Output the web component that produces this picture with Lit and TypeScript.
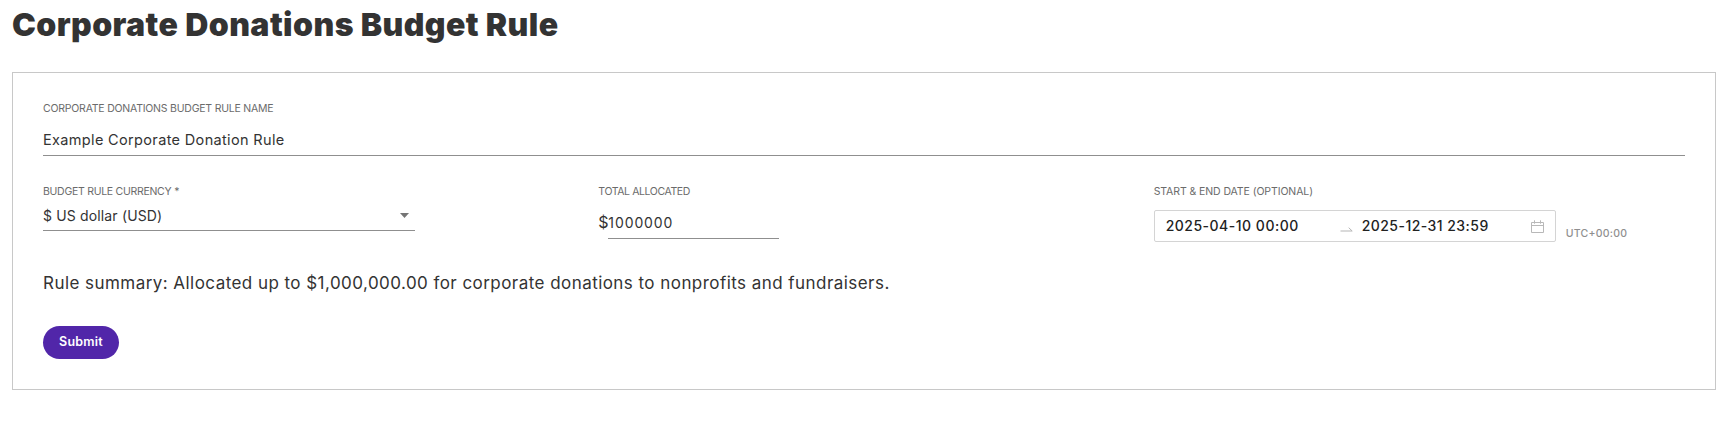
import { LitElement, html, css } from "lit";
import { customElement, property } from "lit/decorators.js";

@customElement("form-field")
class FormField extends LitElement {
  @property() label = "";
  @property() mark = "";

  static styles = css`
    :host {
      display: block;
      min-width: 0;
    }
    .label {
      box-sizing: border-box;
      height: 16px;
      padding-top: 1px;
      line-height: 16px;
      font-size: 10.5px;
      letter-spacing: var(--label-spacing, -0.22px);
      color: #6b6b6b;
      white-space: nowrap;
    }
    .mark {
      margin-left: 3px;
    }
  `;

  render() {
    return html`
      <div class="label">${this.label}${this.mark ? html`<span class="mark">${this.mark}</span>` : ""}</div>
      <slot></slot>
    `;
  }
}

@customElement("app-root")
class AppRoot extends LitElement {
  @property() heading = "Corporate Donations Budget Rule";

  static styles = css`
    :host {
      display: block;
      box-sizing: border-box;
      height: 422px;
      padding: 0 16px 0 12px;
      background: #fff;
      color: #333;
      font-family: Inter, "Liberation Sans", sans-serif;
    }
    .title {
      margin: 0 0 22px;
      font-size: 32px;
      font-weight: 900;
      line-height: 50px;
      letter-spacing: 0.43px;
    }
    .card {
      box-sizing: border-box;
      height: 318px;
      padding: 27px 30px 0;
      border: 1px solid #c8c8c8;
    }
    .value {
      display: flex;
      align-items: center;
      font-size: 14px;
      white-space: nowrap;
      border-bottom: 1px solid #8f8f8f;
    }
    .name {
      height: 31px;
      margin-top: 8px;
      font-size: 14.5px;
      letter-spacing: 0.34px;
    }
    .row {
      display: grid;
      grid-template-columns: repeat(3, minmax(0, 1fr));
      column-gap: 24px;
      margin-top: 27px;
      height: 59px;
    }
    .currency-field {
      --label-spacing: -0.28px;
    }
    .total-field {
      --label-spacing: -0.4px;
    }
    .date-field {
      --label-spacing: -0.085px;
    }
    .select {
      justify-content: space-between;
      box-sizing: border-box;
      width: 70%;
      height: 31px;
      margin-top: 1px;
      padding-right: 6px;
      letter-spacing: 0.15px;
    }
    .amount {
      display: flex;
      margin-top: 9px;
    }
    .symbol {
      width: 10px;
      font-size: 16px;
      line-height: 28px;
    }
    .number {
      box-sizing: border-box;
      width: 171px;
      height: 31px;
      padding-bottom: 2px;
      letter-spacing: 0.9px;
    }
    .dates {
      display: flex;
      margin-top: 11px;
    }
    .range {
      display: flex;
      align-items: center;
      box-sizing: border-box;
      width: 402px;
      height: 32px;
      padding: 0 11px 1px 11px;
      border: 1px solid #d4d4d4;
      border-radius: 2px;
      color: #222;
      font-size: 14px;
      font-weight: 500;
      letter-spacing: 0.5px;
      white-space: nowrap;
    }
    .start {
      width: 174px;
      padding-bottom: 1px;
    }
    .end {
      flex: 1;
      padding-bottom: 1px;
      letter-spacing: 0.46px;
    }
    .arrow {
      width: 13px;
      height: 5px;
      margin: 7px 9px 0 0;
    }
    .calendar {
      width: 13px;
      height: 13px;
      margin-top: 1px;
    }
    .zone {
      padding: 16px 0 0 10px;
      font-size: 10.5px;
      font-weight: 500;
      line-height: 16px;
      letter-spacing: 0.25px;
      color: #8f8f8f;
    }
    .summary {
      margin: 29px 0 31px;
      font-size: 17px;
      line-height: 24px;
      letter-spacing: 0.45px;
      white-space: nowrap;
    }
    .submit {
      display: block;
      width: 76px;
      height: 33px;
      padding: 0 0 2px;
      border: 0;
      border-radius: 17px;
      background: #5126a9;
      color: #fff;
      font: 600 12.5px/31px Inter, "Liberation Sans", sans-serif;
      letter-spacing: 0.22px;
    }
  `;

  render() {
    return html`
      <h1 class="title">${this.heading}</h1>
      <section class="card">
        <form-field label="CORPORATE DONATIONS BUDGET RULE NAME">
          <div class="value name">Example Corporate Donation Rule</div>
        </form-field>
        <div class="row">
          <form-field class="currency-field" label="BUDGET RULE CURRENCY" mark="*">
            <div class="value select">
              <span>$ US dollar (USD)</span>
              <svg width="9" height="5" viewBox="0 0 9 5"><path d="M0 0h9L4.5 5z" fill="#757575" /></svg>
            </div>
          </form-field>
          <form-field class="total-field" label="TOTAL ALLOCATED">
            <div class="amount">
              <span class="symbol">$</span>
              <div class="value number">1000000</div>
            </div>
          </form-field>
          <form-field class="date-field" label="START &amp; END DATE (OPTIONAL)">
            <div class="dates">
              <div class="range">
                <span class="start">2025-04-10 00:00</span>
                <svg class="arrow" viewBox="0 0 13 5">
                  <path d="M0.5 4h11.7L8.7 0.7" fill="none" stroke="#b5b5b5" />
                </svg>
                <span class="end">2025-12-31 23:59</span>
                <svg class="calendar" viewBox="0 0 13 13" fill="none" stroke="#b8b8b8">
                  <path d="M0.5 2.5h12v10h-12zM0.5 5.5h12M3.5 0.3v3.4M9.5 0.3v3.4" />
                </svg>
              </div>
              <div class="zone">UTC+00:00</div>
            </div>
          </form-field>
        </div>
        <p class="summary">
          Rule summary: Allocated up to $1,000,000.00 for corporate donations to nonprofits and fundraisers.
        </p>
        <button class="submit" type="button">Submit</button>
      </section>
    `;
  }
}
